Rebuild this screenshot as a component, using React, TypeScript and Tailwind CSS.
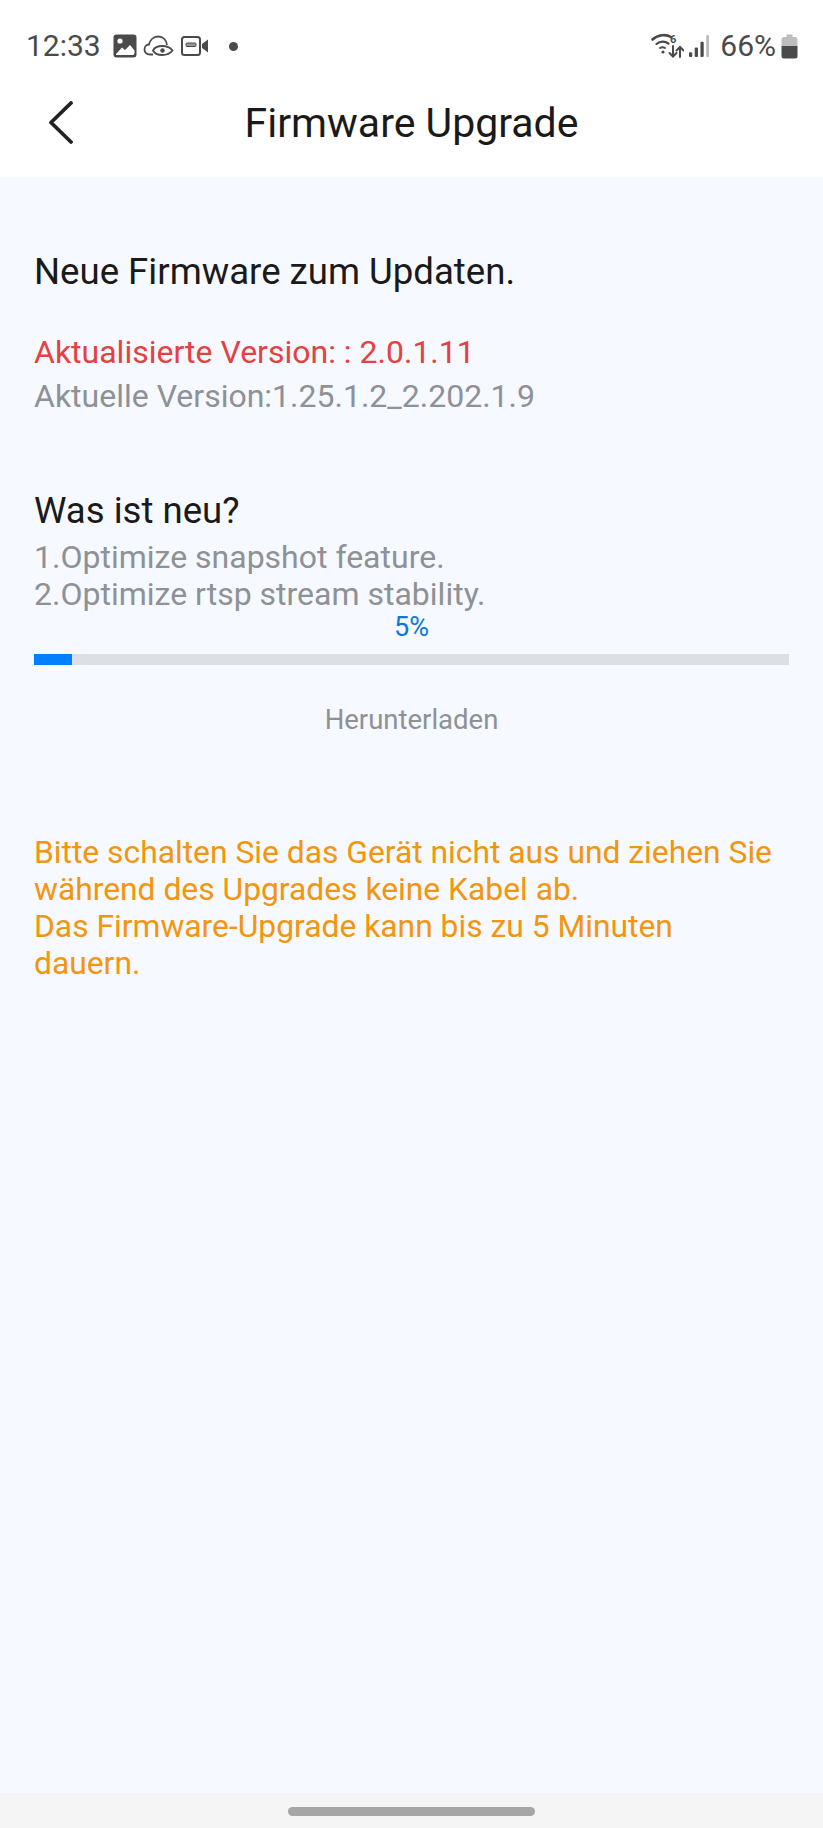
const StatusIcons = () => (
  <div className="flex items-center gap-[4px]">
    {/* gallery */}
    <svg width="24" height="24" viewBox="0 0 24 24" className="mr-[2px]">
      <rect x="0.5" y="0.5" width="23" height="23" rx="3" fill="#4a4a4a" />
      <circle cx="7" cy="7" r="2.6" fill="#fff" />
      <path d="M3 20 L9 13.5 L12 16 L17 11 L21.5 16.5 V19 Q21.5 21 19.5 21 H3 Z" fill="#fff" />
    </svg>
    {/* cloud with eye */}
    <svg width="31" height="24" viewBox="0 0 31 24" fill="none" stroke="#4a4a4a" strokeWidth="1.8">
      <path d="M10 20.5 H7 C3.5 20.5 1.5 18.5 1.5 15.5 C1.5 12.5 3.5 10.5 6 10.5 C7 6 10.5 2.5 15 2.5 C20 2.5 23.5 6 24 11" />
      <path d="M10 16.5 C13 10.5 25 10.5 29.5 16.5 C25 22.5 13 22.5 10 16.5 Z" />
      <circle cx="19.5" cy="16.5" r="2.2" fill="#4a4a4a" stroke="none" />
    </svg>
    {/* video */}
    <svg width="28" height="22" viewBox="0 0 28 22" fill="none" className="ml-[3px]">
      <rect x="1" y="2" width="18" height="18" rx="2.5" stroke="#4a4a4a" strokeWidth="2" />
      <rect x="5" y="8" width="10" height="3.5" rx="1" fill="#9a9a9a" stroke="#4a4a4a" strokeWidth="1" />
      <path d="M21 9 L27 4.5 V17.5 L21 13 Z" fill="#4a4a4a" />
    </svg>
  </div>
)

const SignalIcons = () => (
  <div className="flex items-center">
    {/* wifi 6 up/down */}
    <svg width="33" height="26" viewBox="0 0 33 26" fill="none" stroke="#4a4a4a" strokeLinecap="round">
      <path d="M1.5 6.5 C7 1.5 15 1 20 4" strokeWidth="2.6" />
      <path d="M5.5 11 C9 8 14 8 17.5 10.5" strokeWidth="2.2" />
      <path d="M9 15 C10.5 14 12.5 14 14 15" strokeWidth="2" />
      <circle cx="12" cy="19" r="1.6" fill="#4a4a4a" stroke="none" />
      <path d="M22 13 V23 M18.5 20 L22 23.5 L25.5 20" strokeWidth="2" />
      <path d="M29 24 V14.5 M25.5 17.5 L29 14 L32.5 17.5" strokeWidth="2" />
    </svg>
    <span className="-ml-[14px] mb-[14px] text-[11px] font-bold leading-none text-[#4a4a4a] [font-family:Roboto,sans-serif]">6</span>
    {/* signal */}
    <svg width="21" height="23" viewBox="0 0 22 24" className="ml-[13px]">
      <rect x="0" y="18" width="3.4" height="5" rx="1" fill="#4a4a4a" />
      <rect x="6" y="13" width="3.4" height="10" rx="1" fill="#4a4a4a" />
      <rect x="12" y="7" width="3.4" height="16" rx="1" fill="#4a4a4a" />
      <rect x="18" y="0" width="3" height="23" rx="1" fill="#bdbdbd" />
    </svg>
  </div>
)

const Battery = () => (
  <svg width="17" height="25" viewBox="0 0 17 25">
    <path d="M5.5 0.5 H11.5 V3 H14 Q16.5 3 16.5 5.5 V12 H0.5 V5.5 Q0.5 3 3 3 H5.5 Z" fill="#bdbdbd" />
    <path d="M0.5 12 H16.5 V22 Q16.5 24.5 14 24.5 H3 Q0.5 24.5 0.5 22 Z" fill="#4a4a4a" />
  </svg>
)

export default function App() {
  return (
    <div className="flex h-[1828px] w-[823px] flex-col overflow-hidden bg-[#f6f9ff] [font-family:Roboto,sans-serif]">
      {/* Status bar + nav */}
      <div className="h-[177px] shrink-0 bg-white">
        <div className="flex h-[92px] items-center justify-between pl-[26px] pr-[25px]">
          <div className="flex items-center gap-[12px]">
            <span className="text-[30px] leading-none text-[#4a4a4a]">12:33</span>
            <StatusIcons />
            <span className="ml-[8px] h-[9px] w-[9px] rounded-full bg-[#4a4a4a]" />
          </div>
          <div className="flex items-center gap-[10px]">
            <SignalIcons />
            <span className="-mr-[5px] text-[30px] leading-none text-[#4a4a4a]">66%</span>
            <Battery />
          </div>
        </div>
        <div className="relative flex h-[62px] items-center justify-center">
          <svg width="26" height="44" viewBox="0 0 26 44" fill="none" className="absolute left-[48px] top-[9px]">
            <path d="M23 2 L3 21.5 L23 41" stroke="#222" strokeWidth="3.8" strokeLinecap="round" strokeLinejoin="round" />
          </svg>
          <h1 className="text-[41px] font-normal leading-none text-[#1a1a1a]">Firmware Upgrade</h1>
        </div>
      </div>

      {/* Content */}
      <div className="flex flex-1 flex-col px-[34px] pt-[74px]">
        <p className="text-[36.6px] leading-[42px] text-[#1a1a1a]">Neue Firmware zum Updaten.</p>

        <p className="mt-[37px] text-[32px] leading-[44px] text-[#e54141]">Aktualisierte Version: : 2.0.1.11</p>
        <p className="text-[32px] leading-[44px] text-[#8e9196]">Aktuelle Version:1.25.1.2_2.202.1.9</p>

        <p className="mt-[72px] text-[36.6px] leading-[42px] text-[#1a1a1a]">Was ist neu?</p>
        <p className="mt-[7px] text-[32px] leading-[37px] text-[#8e9196]">1.Optimize snapshot feature.</p>
        <p className="text-[32px] leading-[37px] text-[#8e9196]">2.Optimize rtsp stream stability.</p>

        <p className="-mt-px text-center text-[27px] leading-[30px] text-[#0a78e0]">5%</p>
        <div className="mt-[12px] h-[11px] w-full bg-[#dcdfe4]">
          <div className="h-full w-[38px] bg-[#007fff]" />
        </div>
        <p className="mt-[39px] text-center text-[27.5px] leading-[32px] text-[#8e9196]">Herunterladen</p>

        <p className="mt-[98px] pr-[8px] text-[31.8px] leading-[37px] text-[#f3950d]">
          Bitte schalten Sie das Gerät nicht aus und ziehen Sie während des Upgrades keine Kabel ab.
          <br />
          Das Firmware-Upgrade kann bis zu 5 Minuten dauern.
        </p>
      </div>

      {/* Gesture bar */}
      <div className="flex h-[35px] shrink-0 items-start justify-center bg-[#f5f5f5] pt-[14px]">
        <div className="h-[9px] w-[247px] rounded-full bg-[#a6a6a6]" />
      </div>
    </div>
  )
}
